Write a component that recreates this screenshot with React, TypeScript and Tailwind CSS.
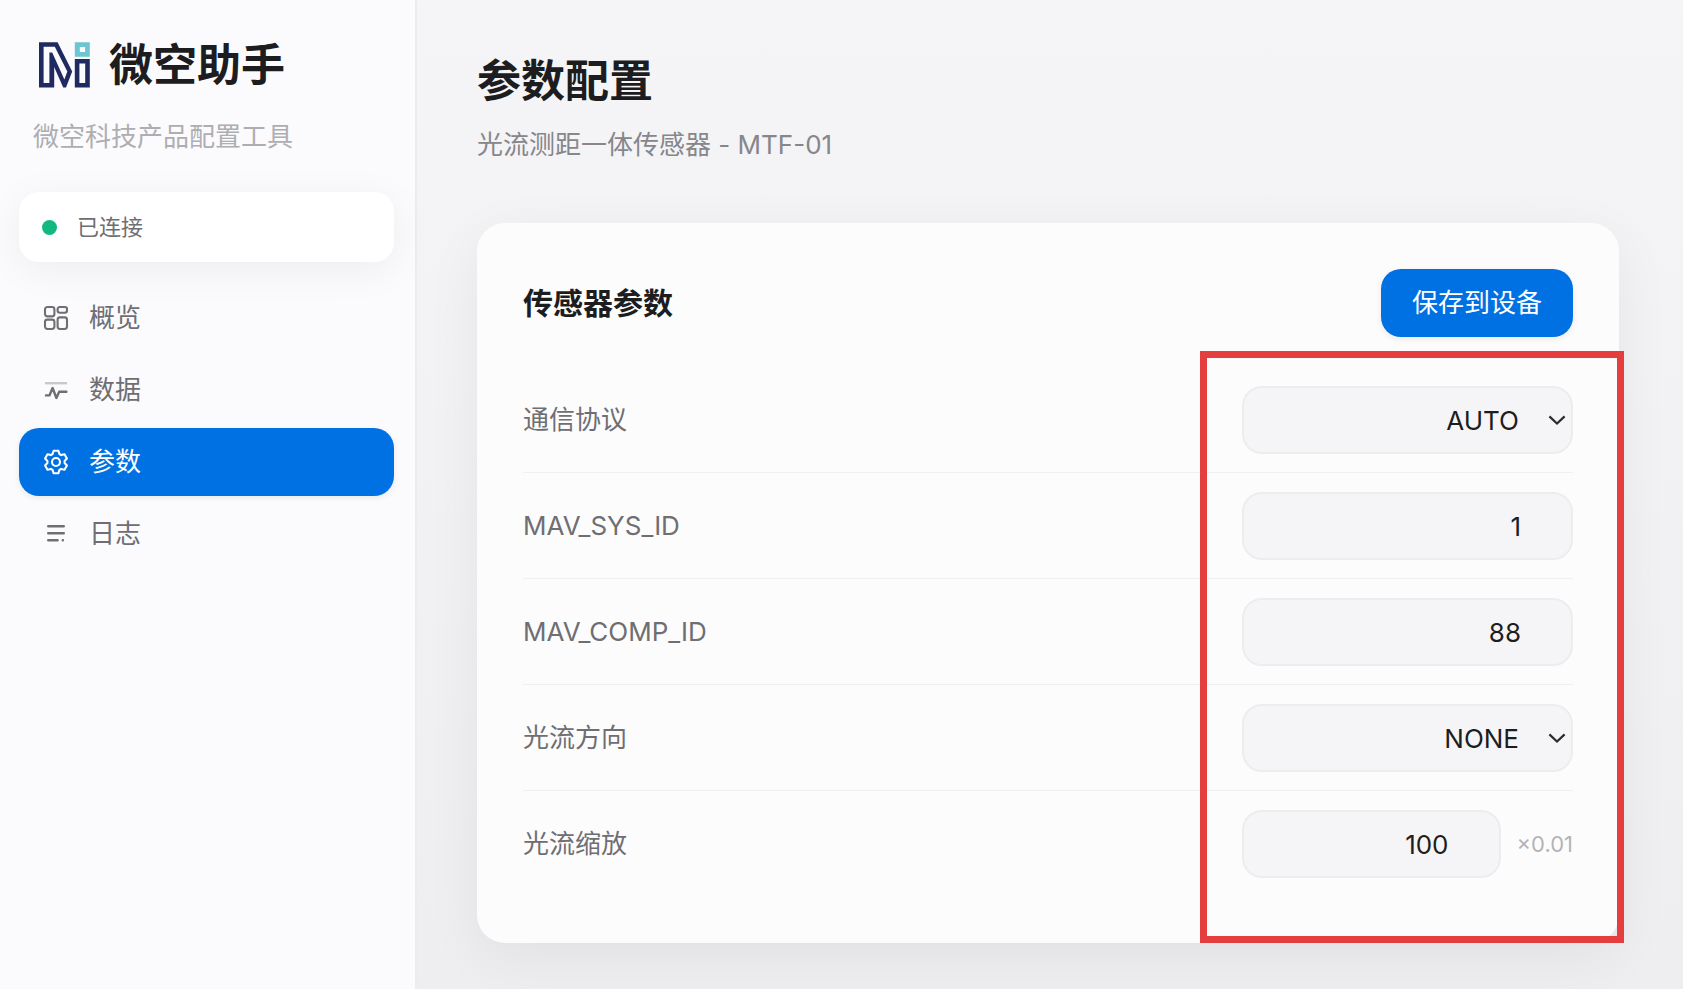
import { useState } from "react";
import type { ReactNode } from "react";
import clsx from "clsx";

interface Param {
  id: string;
  label: string;
  value: string;
  options?: string[];
  unit?: string;
}

const initialParams: Param[] = [
  { id: "protocol", label: "通信协议", value: "AUTO", options: ["AUTO"] },
  { id: "mav-sys-id", label: "MAV_SYS_ID", value: "1" },
  { id: "mav-comp-id", label: "MAV_COMP_ID", value: "88" },
  { id: "flow-direction", label: "光流方向", value: "NONE", options: ["NONE"] },
  { id: "flow-scale", label: "光流缩放", value: "100", unit: "×0.01" },
];

function Logo() {
  return (
    <svg className="h-[60px] w-[60px] shrink-0" viewBox="0 0 60 60" fillRule="evenodd" aria-hidden="true">
      <path
        fill="#202a60"
        d="M6 7.3H24.6L39.2 36.6L33 52.5H30.2L21.2 32V52.5H6ZM10.6 11.8V48H16.4V17.6H19.2L31.4 44.4L34.3 36.6L21.8 11.8Z"
      />
      <path fill="#202a60" d="M41.8 24H56.8V52.5H41.8ZM46.4 28.4V48H52.2V28.4Z" />
      <path fill="#6cc5d0" d="M41.8 7.3H56.8V21.7H41.8ZM46.8 12V17.1H52.1V12Z" />
    </svg>
  );
}

function NavIcon({ children }: { children: ReactNode }) {
  return (
    <svg
      className="h-[26px] w-[26px] shrink-0"
      viewBox="0 0 26 26"
      fill="none"
      stroke="currentColor"
      strokeWidth="2.1"
      strokeLinecap="round"
      strokeLinejoin="round"
      aria-hidden="true"
    >
      {children}
    </svg>
  );
}

const navItems = [
  {
    label: "概览",
    icon: (
      <NavIcon>
        <rect x="2" y="2" width="9.4" height="9.4" rx="2.4" />
        <rect x="14.6" y="2" width="9.4" height="5.8" rx="2.2" />
        <rect x="2" y="14.6" width="9.4" height="9.4" rx="2.4" />
        <rect x="14.6" y="12.4" width="9.4" height="11.6" rx="2.4" />
      </NavIcon>
    ),
  },
  {
    label: "数据",
    icon: (
      <NavIcon>
        <path d="M2 6.2H24" strokeWidth="2.4" opacity="0.35" strokeLinecap="butt" />
        <path d="M3 18.4H6.4L9.6 11L13.4 21L16.2 14.8H23.4" strokeWidth="2.4" />
      </NavIcon>
    ),
  },
  {
    label: "参数",
    icon: (
      <NavIcon>
        <path d="M10.6 1.8H15.4L16.4 5L18.2 6.1L21.5 5.3L23.9 9.5L21.6 11.9V14.1L23.9 16.5L21.5 20.7L18.2 19.9L16.4 21L15.4 24.2H10.6L9.6 21L7.8 19.9L4.5 20.7L2.1 16.5L4.4 14.1V11.9L2.1 9.5L4.5 5.3L7.8 6.1L9.6 5Z" />
        <circle cx="13" cy="13" r="4" />
      </NavIcon>
    ),
  },
  {
    label: "日志",
    icon: (
      <NavIcon>
        <path d="M5.2 5.2H20.8M5.2 12.2H20.8M5.2 19.2H14.6M19.8 19.2H19.9" strokeWidth="2.4" />
      </NavIcon>
    ),
  },
];

function Sidebar() {
  const [active, setActive] = useState("参数");

  return (
    <aside className="flex w-[417px] shrink-0 flex-col border-r-2 border-[#ececef] bg-[#fbfbfd] pt-[35px] pr-[21px] pl-[19px]">
      <div className="px-[14px]">
        <div className="flex items-center gap-4">
          <Logo />
          <span className="text-[44px] leading-[60px] font-bold text-[#1d1d1f]">微空助手</span>
        </div>
        <p className="mt-6 text-[26px] leading-9 text-[#aeaeb2]">微空科技产品配置工具</p>
      </div>

      <div className="mt-[37px] flex h-[70px] items-center gap-5 rounded-[20px] bg-white px-[23px] shadow-[0_8px_40px_rgba(0,0,0,0.06)]">
        <span className="h-[15px] w-[15px] rounded-full bg-[#10b981]" />
        <span className="text-[22px] leading-8 text-[#6e6e73]">已连接</span>
      </div>

      <nav className="mt-[22px] flex flex-col gap-1">
        {navItems.map((item) => (
          <button
            key={item.label}
            type="button"
            onClick={() => setActive(item.label)}
            className={clsx(
              "flex h-[68px] items-center gap-5 rounded-[20px] px-6 text-[26px] leading-9",
              active === item.label
                ? "bg-[#0071e3] text-white shadow-[0_2px_6px_rgba(0,0,0,0.08)]"
                : "text-[#6e6e73]"
            )}
          >
            {item.icon}
            {item.label}
          </button>
        ))}
      </nav>
    </aside>
  );
}

function ParamRow({ param, onChange }: { param: Param; onChange: (value: string) => void }) {
  const field =
    "h-[68px] w-full min-w-0 appearance-none rounded-[20px] border-2 border-[#ededf0] bg-[#f5f5f7] text-right text-[26px] text-[#1d1d1f] outline-none";

  return (
    <div className="flex items-center justify-between border-b border-[#f0f0f2] pt-[19px] pb-[18px] last:border-transparent">
      <label htmlFor={param.id} className="text-[26px] leading-9 text-[#6e6e73]">
        {param.label}
      </label>
      <div className="flex w-[331px] items-center gap-4">
        {param.options ? (
          <div className="relative w-full">
            <select
              id={param.id}
              value={param.value}
              onChange={(e) => onChange(e.target.value)}
              className={clsx(field, "pr-[52px] pl-6 [text-align-last:right]")}
            >
              {param.options.map((option) => (
                <option key={option}>{option}</option>
              ))}
            </select>
            <svg
              className="pointer-events-none absolute top-1/2 right-[7px] h-[18px] w-[18px] -translate-y-1/2"
              viewBox="0 0 18 18"
              fill="none"
              stroke="#2c2c2e"
              strokeWidth="2.2"
              aria-hidden="true"
            >
              <path d="M1.4 5.4L9 12.6L16.6 5.4" />
            </svg>
          </div>
        ) : (
          <input
            id={param.id}
            inputMode="numeric"
            value={param.value}
            onChange={(e) => onChange(e.target.value)}
            className={clsx(field, "pr-[50px] pl-6")}
          />
        )}
        {param.unit && <span className="text-[22px] leading-8 text-[#b4b4b8]">{param.unit}</span>}
      </div>
    </div>
  );
}

export default function App() {
  const [params, setParams] = useState(initialParams);

  const updateParam = (id: string, value: string) => {
    setParams((prev) => prev.map((p) => (p.id === id ? { ...p, value } : p)));
  };

  return (
    <div className="flex min-h-screen bg-linear-to-b from-[#f5f5f7] to-[#eeeef1] font-['Inter','Noto_Sans_CJK_SC',sans-serif]">
      <Sidebar />

      <main className="min-w-0 flex-1 overflow-hidden pt-[55px] pr-16 pb-[45px] pl-[60px]">
        <h1 className="text-[44px] leading-[52px] font-bold text-[#1d1d1f]">参数配置</h1>
        <p className="mt-5 text-[26px] leading-9 text-[#86868b]">光流测距一体传感器 - MTF-01</p>

        <section className="relative mt-[60px] rounded-[28px] bg-[#fcfcfc] p-[46px] shadow-[0_14px_56px_rgba(0,0,0,0.06)]">
          <div className="mb-[30px] flex items-center justify-between">
            <h2 className="text-[30px] leading-10 font-bold text-[#1d1d1f]">传感器参数</h2>
            <button
              type="button"
              className="h-[68px] rounded-[20px] bg-[#0071e3] px-[31px] text-[26px] leading-9 text-white shadow-[0_2px_6px_rgba(0,0,0,0.08)]"
            >
              保存到设备
            </button>
          </div>

          <div>
            {params.map((param) => (
              <ParamRow key={param.id} param={param} onChange={(value) => updateParam(param.id, value)} />
            ))}
          </div>

          {/* Highlight around the editable values */}
          <div className="pointer-events-none absolute top-32 -right-[5px] bottom-0 w-[424px] border-[7px] border-[#e53e3e]" />
        </section>
      </main>
    </div>
  );
}
